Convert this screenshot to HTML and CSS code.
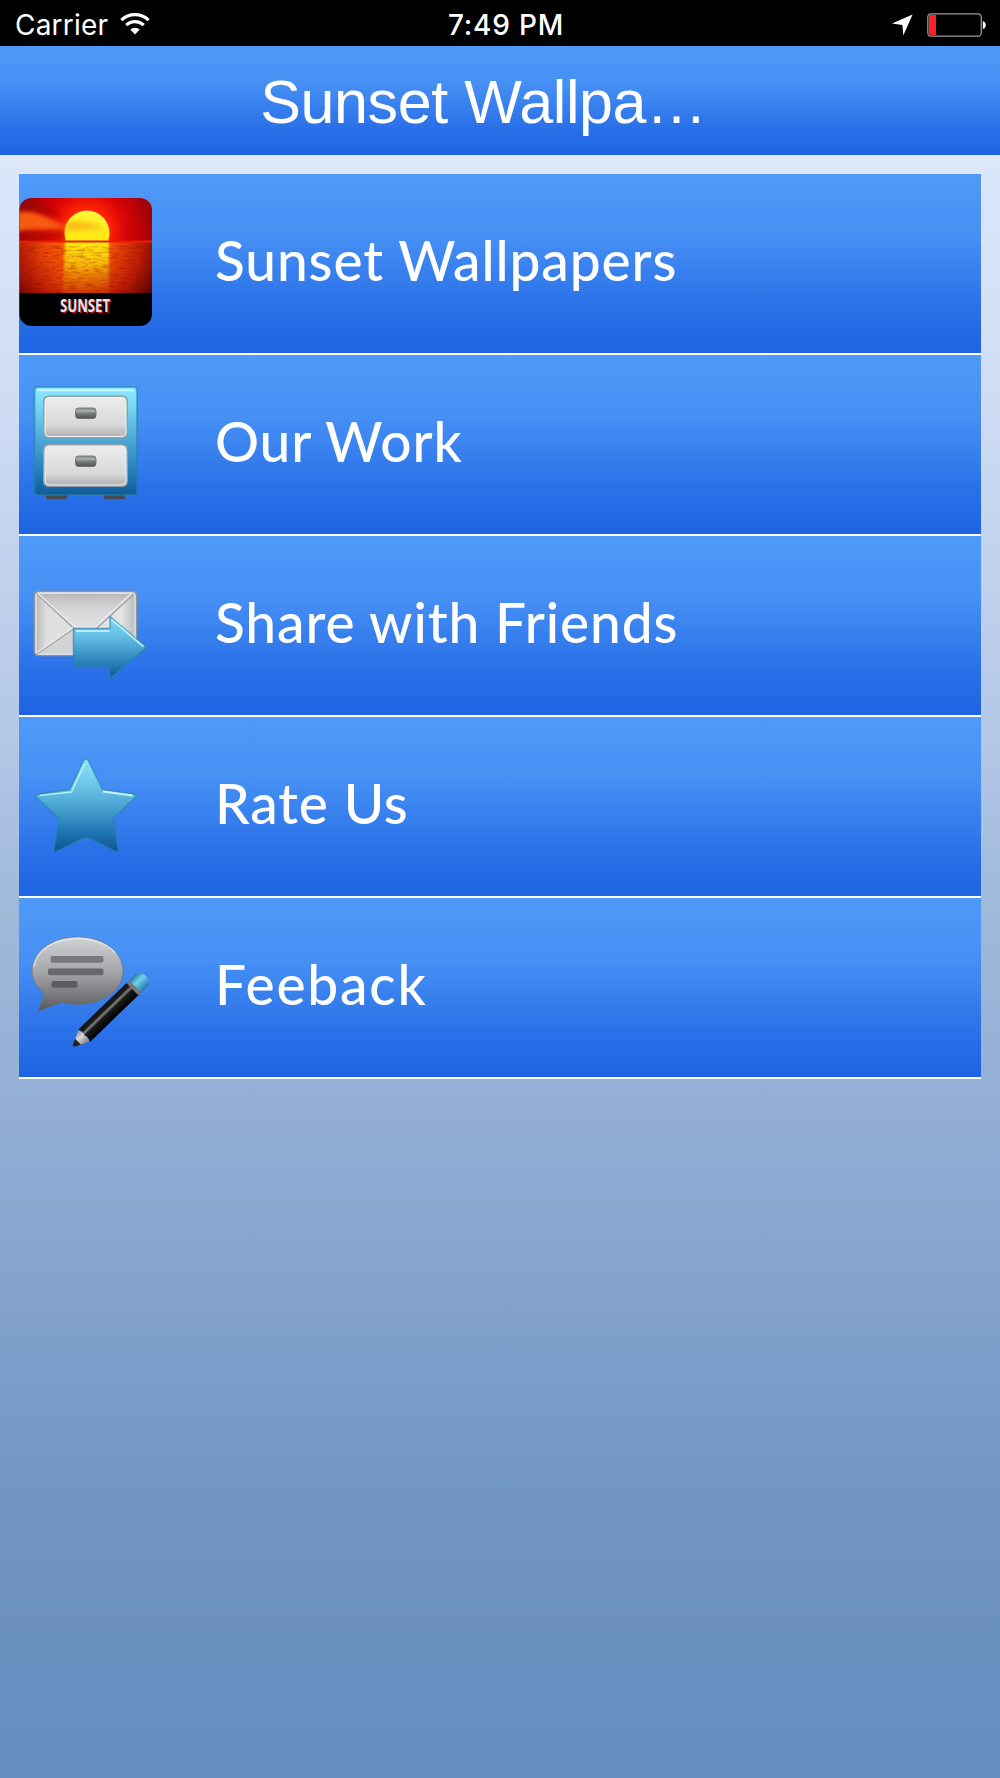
FILE: index.html
```html
<!DOCTYPE html>
<html lang="en">
<head>
    <meta charset="UTF-8"/>
    <meta name="viewport" content="width=device-width, initial-scale=1.0"/>
    <title>Sunset Wallpapers</title>
    <link rel="stylesheet" href="styles.css">
</head>
<body>
    <div class="status-bar">
        <div class="carrier">
            <span>Carrier</span>
            <svg class="wifi" viewBox="0 0 30 22" width="30" height="22">
                <path d="M1.4 7.2 A19.5 19.5 0 0 1 28.6 7.2" fill="none" stroke="#fff" stroke-width="3.2"/>
                <path d="M6.3 12.2 A12.4 12.4 0 0 1 23.7 12.2" fill="none" stroke="#fff" stroke-width="3.2"/>
                <path d="M10.3 16.6 A6.8 6.8 0 0 1 19.7 16.6 L15 21.5 Z" fill="#fff"/>
            </svg>
        </div>
        <span class="time">7:49 PM</span>
        <div class="status-right">
            <svg viewBox="0 0 21 22" width="21" height="22">
                <path d="M20.600 0.5 L0 9.6 L10.400 11 L11.300 21.5 Z" fill="#fff"/>
            </svg>
            <svg viewBox="0 0 59 24" width="59" height="24">
                <rect x="0.8" y="0.8" width="53.5" height="22.4" rx="3.5" fill="none" stroke="#999" stroke-width="1.3"/>
                <path d="M3.5 2 H9 V22 H3.5 Q2 22 2 20 V4 Q2 2 3.5 2 Z" fill="#ff1f24"/>
                <path d="M55.800 8 Q58.800 9 58.800 12 Q58.800 15 55.800 16 Z" fill="#fff"/>
            </svg>
        </div>
    </div>

    <div class="header">
        <h1>Sunset Wallpa…</h1>
    </div>

    <ul class="menu">
        <li class="row">
            <svg class="icon" viewBox="0 0 140 140">
                <defs>
                    <clipPath id="appClip"><rect x="0.5" y="6" width="132.5" height="128" rx="12"/></clipPath>
                    <clipPath id="skyClip"><rect x="0" y="6" width="133" height="43"/></clipPath>
                    <radialGradient id="sky" gradientUnits="userSpaceOnUse" cx="68" cy="38" r="76">
                        <stop offset="0.28" stop-color="#ff2406"/>
                        <stop offset="0.5" stop-color="#dc0508"/>
                        <stop offset="1" stop-color="#870006"/>
                    </radialGradient>
                    <radialGradient id="sea" gradientUnits="userSpaceOnUse" cx="62" cy="50" r="88">
                        <stop offset="0" stop-color="#ff6a08"/>
                        <stop offset="0.4" stop-color="#ee4a08"/>
                        <stop offset="0.7" stop-color="#b81c04"/>
                        <stop offset="1" stop-color="#4c0202"/>
                    </radialGradient>
                    <linearGradient id="glow" x1="0" y1="0" x2="0" y2="1">
                        <stop offset="0" stop-color="#ffef10"/>
                        <stop offset="0.4" stop-color="#fac808"/>
                        <stop offset="1" stop-color="#d87508" stop-opacity="0.2"/>
                    </linearGradient>
                    <linearGradient id="sun" x1="0" y1="0" x2="0" y2="1">
                        <stop offset="0" stop-color="#fff83a"/>
                        <stop offset="0.5" stop-color="#ffe81a"/>
                        <stop offset="0.8" stop-color="#fff200"/>
                        <stop offset="1" stop-color="#ff8a00"/>
                    </linearGradient>
                    <filter id="soft" x="-20%" y="-50%" width="140%" height="200%"><feGaussianBlur stdDeviation="2"/></filter>
                    <filter id="softer" x="-20%" y="-20%" width="140%" height="140%"><feGaussianBlur stdDeviation="1.3"/></filter>
                    <filter id="ripple" x="0" y="0" width="100%" height="100%">
                        <feTurbulence type="fractalNoise" baseFrequency="0.12 0.5" numOctaves="3" seed="4"/>
                        <feColorMatrix values="0 0 0 0 0.3  0 0 0 0 0  0 0 0 0 0  1.8 0 0 0 -0.75"/>
                    </filter>
                </defs>
                <g clip-path="url(#appClip)">
                    <rect x="0" y="6" width="133" height="44" fill="url(#sky)"/>
                    <g clip-path="url(#skyClip)">
                        <path d="M-4 21 C14 16 28 25 48 36 C30 40 14 36 -4 40 Z" fill="#f75a10" filter="url(#soft)"/>
                        <path d="M-4 9 L28 14 L44 26 L14 18 Z" fill="#8e0a04" opacity="0.45" filter="url(#soft)"/>
                        <path d="M-4 43 L44 39 L44 46 L-4 49 Z" fill="#a80a04" opacity="0.6" filter="url(#soft)"/>
                        <circle cx="68" cy="41" r="22.5" fill="url(#sun)"/>
                        <path d="M46 32 C56 27 68 30 84 35 C72 39 60 37 46 38 Z" fill="#f9a70c" opacity="0.7" filter="url(#soft)"/>
                    </g>
                    <rect x="0" y="50" width="133" height="52" fill="url(#sea)"/>
                    <path d="M46 48 H90 V101 H44 Z" fill="url(#glow)" filter="url(#softer)"/>
                    <rect x="0" y="54" width="133" height="48" filter="url(#ripple)" opacity="0.5"/>
                    <rect x="0" y="48.500" width="133" height="2" fill="#e81c04"/>
                    <rect x="0" y="101" width="133" height="34" fill="#000"/>
                </g>
                <text class="app-text shade" x="67" y="120.500" textLength="50" lengthAdjust="spacingAndGlyphs">SUNSET</text>
                <text class="app-text" x="66" y="120" textLength="50" lengthAdjust="spacingAndGlyphs">SUNSET</text>
            </svg>
            <span class="label">Sunset Wallpapers</span>
        </li>
        <li class="row">
            <svg class="icon" viewBox="0 0 140 140">
                <defs>
                    <linearGradient id="cab" x1="0" y1="0" x2="0" y2="1">
                        <stop offset="0" stop-color="#8be6fa"/>
                        <stop offset="0.15" stop-color="#7cdcf5"/>
                        <stop offset="0.55" stop-color="#439fd0"/>
                        <stop offset="0.9" stop-color="#166cab"/>
                        <stop offset="1" stop-color="#125a94"/>
                    </linearGradient>
                    <linearGradient id="drawer" x1="0" y1="0" x2="0" y2="1">
                        <stop offset="0" stop-color="#ededee"/>
                        <stop offset="0.7" stop-color="#d8d8da"/>
                        <stop offset="1" stop-color="#aeaeb2"/>
                    </linearGradient>
                    <linearGradient id="knob" x1="0" y1="0" x2="0" y2="1">
                        <stop offset="0" stop-color="#8f9292"/>
                        <stop offset="0.35" stop-color="#a9abab"/>
                        <stop offset="0.45" stop-color="#828484"/>
                        <stop offset="1" stop-color="#4c4e50"/>
                    </linearGradient>
                </defs>
                <rect x="27" y="119" width="21" height="7" rx="1.5" fill="#444a50"/>
                <rect x="85" y="119" width="21" height="7" rx="1.5" fill="#444a50"/>
                <rect x="15.500" y="14" width="102.500" height="108" rx="3" fill="url(#cab)" stroke="#2583a8" stroke-opacity="0.55" stroke-width="2"/>
                <path d="M18 17.2 H115" stroke="#c9f7ff" stroke-width="2"/>
                <rect x="25" y="23.5" width="83" height="41" rx="4.5" fill="url(#drawer)" stroke="#8fa0a8" stroke-width="2"/>
                <rect x="26" y="24.5" width="81" height="39" rx="4" fill="none" stroke="#f4f4f4" stroke-width="1"/>
                <rect x="25" y="72" width="83" height="41" rx="4.5" fill="url(#drawer)" stroke="#8fa0a8" stroke-width="2"/>
                <rect x="26" y="73" width="81" height="39" rx="4" fill="none" stroke="#f4f4f4" stroke-width="1"/>
                <rect x="56.500" y="35" width="20.500" height="10.5" rx="3" fill="url(#knob)" stroke="#66686a" stroke-width="0.8"/>
                <rect x="56.500" y="83" width="20.500" height="10.5" rx="3" fill="url(#knob)" stroke="#66686a" stroke-width="0.8"/>
            </svg>
            <span class="label">Our Work</span>
        </li>
        <li class="row">
            <svg class="icon" viewBox="0 0 140 140">
                <defs>
                    <linearGradient id="env" x1="0" y1="0" x2="1" y2="0">
                        <stop offset="0" stop-color="#b4b5b7"/>
                        <stop offset="0.12" stop-color="#dddee0"/>
                        <stop offset="0.85" stop-color="#e4e5e7"/>
                        <stop offset="1" stop-color="#b4b5b7"/>
                    </linearGradient>
                    <linearGradient id="flap" x1="0" y1="0" x2="0" y2="1">
                        <stop offset="0" stop-color="#bbbbbd"/>
                        <stop offset="0.5" stop-color="#d8d8da"/>
                        <stop offset="1" stop-color="#e2e2e4"/>
                    </linearGradient>
                    <linearGradient id="arrow" x1="0" y1="0" x2="0" y2="1">
                        <stop offset="0" stop-color="#80dcf6"/>
                        <stop offset="0.3" stop-color="#66c1e6"/>
                        <stop offset="0.8" stop-color="#2379b4"/>
                        <stop offset="1" stop-color="#0f538c"/>
                    </linearGradient>
                </defs>
                <rect x="15.5" y="37.5" width="102" height="64" rx="4" fill="url(#env)" stroke="#909296" stroke-width="1.6"/>
                <path d="M19 40 L55 74 H78 L114 40 Z" fill="url(#flap)"/>
                <path d="M19 99 L54 75 H79 L114 99 Z" fill="#d2d3d5"/>
                <rect x="17" y="39" width="99" height="61" rx="3" fill="none" stroke="#dfdfe0" stroke-width="1.6"/>
                <path d="M18 40 L55 74.5 L18 100 M115 40 L78 74" fill="none" stroke="#a2a3a5" stroke-width="1.5"/>
                <path d="M19 39.5 L56 73 M19 98 L54 73.5 M113 39 L76 73" fill="none" stroke="#eee" stroke-width="1.2"/>
                <path d="M54.5 74.5 H91 V62.5 L127.5 93.5 L91 124.5 V112.5 H54.5 Z" fill="url(#arrow)" stroke="#2b7fae" stroke-opacity="0.7" stroke-width="1.4" stroke-linejoin="round"/>
                <path d="M57 77 H90.5 M92.5 65.5 L124.5 92.5" fill="none" stroke="#b5effc" stroke-width="1.8"/>
            </svg>
            <span class="label">Share with Friends</span>
        </li>
        <li class="row">
            <svg class="icon" viewBox="0 0 140 140">
                <defs>
                    <linearGradient id="star" x1="0" y1="0" x2="0" y2="1">
                        <stop offset="0" stop-color="#8ce6fa"/>
                        <stop offset="0.35" stop-color="#62bde2"/>
                        <stop offset="0.8" stop-color="#1e74b2"/>
                        <stop offset="1" stop-color="#105390"/>
                    </linearGradient>
                </defs>
                <path d="M67 24 Q68.500 24 69.500 26 L83.500 54.5 L116.500 59.500 Q118 60.500 116.500 62 L94.500 83 L99 115 Q99 117.500 96.500 116.500 L70.500 103.500 Q67 102 63.500 103.500 L37.500 116.500 Q35 117.500 35 115 L40 83 L17 62 Q15.500 60.500 18 59.500 L50.500 54.5 L64.500 26 Q65.500 24 67 24 Z" fill="url(#star)" stroke="#2783ac" stroke-opacity="0.6" stroke-width="1.6"/>
                <path d="M20.500 60.500 L52.500 57 L65.500 29" fill="none" stroke="#c5f3fc" stroke-width="1.6" stroke-opacity="0.85"/>
                <path d="M84 56.500 L113.500 60.500" stroke="#c5f3fc" stroke-width="1.8"/>
            </svg>
            <span class="label">Rate Us</span>
        </li>
        <li class="row">
            <svg class="icon feedback" viewBox="0 0 140 140">
                <defs>
                    <linearGradient id="bubble" x1="0" y1="0" x2="0" y2="1">
                        <stop offset="0" stop-color="#d2d3d5"/>
                        <stop offset="0.5" stop-color="#a2a3a6"/>
                        <stop offset="0.9" stop-color="#68696c"/>
                        <stop offset="1" stop-color="#4c4e54"/>
                    </linearGradient>
                    <linearGradient id="barrel" x1="0" y1="0" x2="0" y2="1">
                        <stop offset="0" stop-color="#111"/>
                        <stop offset="0.25" stop-color="#1c1c1c"/>
                        <stop offset="0.38" stop-color="#858585"/>
                        <stop offset="0.52" stop-color="#1a1a1a"/>
                        <stop offset="1" stop-color="#000"/>
                    </linearGradient>
                    <linearGradient id="eraser" x1="0" y1="0" x2="0" y2="1">
                        <stop offset="0" stop-color="#237da6"/>
                        <stop offset="0.4" stop-color="#74d2ef"/>
                        <stop offset="1" stop-color="#1f79ac"/>
                    </linearGradient>
                    <linearGradient id="wood" x1="0" y1="0" x2="0" y2="1">
                        <stop offset="0" stop-color="#8c8c8c"/>
                        <stop offset="0.4" stop-color="#d8d8d8"/>
                        <stop offset="1" stop-color="#77787a"/>
                    </linearGradient>
                </defs>
                <path d="M58.500 24 C84.500 24 104 39 104 58 C104 77 84.500 91.500 58.500 91.500 Q49.500 91.500 42.500 89.500 L19.500 98 L25 80.500 C17.500 74 13 66 13 58 C13 39 32.500 24 58.500 24 Z" fill="url(#bubble)" stroke="#6f7073" stroke-opacity="0.6" stroke-width="1"/>
                <path d="M15 54 C17.500 37 34.500 26 58.500 25.500 C74.500 25.500 88.500 31 96.500 40" fill="none" stroke="#ededee" stroke-width="1.3" stroke-opacity="0.75"/>
                <rect x="31.500" y="43" width="53" height="6.800" rx="2" fill="#78797b"/>
                <rect x="29" y="55.500" width="55.500" height="6.800" rx="2" fill="#68696b"/>
                <rect x="32.500" y="68" width="26" height="6.800" rx="2" fill="#5c5d60"/>
                <g transform="translate(55 132.500) rotate(-44)">
                    <path d="M0 -1.500 L14 -8 L16 0 L14 8 L0 1.500 Z" fill="url(#wood)"/>
                    <path d="M-1 0 Q-1 -2 5.500 -4 V4 Q-1 2 -1 0 Z" fill="#222"/>
                    <path d="M14 -8.500 H83 V8.500 H14 Q17 4 14.500 0 Q17 -4 14 -8.500 Z" fill="url(#barrel)"/>
                    <rect x="81" y="-8.500" width="4" height="17" fill="#777"/>
                    <path d="M85 -8.500 H94 Q100 -7 100 0 Q100 7 94 8.500 H85 Z" fill="url(#eraser)"/>
                </g>
            </svg>
            <span class="label wide">Feeback</span>
        </li>
    </ul>
</body>
</html>
```

FILE: styles.css
```css
* {
    box-sizing: border-box;
}
body {
    margin: 0;
    min-height: 1778px;
    background: linear-gradient(#dce8fa 150px, #d0def5 380px, #b4c7e7 740px, #a0bada 900px, #93afd5 1100px, #7195c4 1500px, #658dbe 1778px);
    color: #fff;
}
.status-bar {
    display: grid;
    grid-template-columns: 1fr auto 1fr;
    align-items: center;
    height: 46px;
    padding: 4px 14px 0 15px;
    background: #000;
    font-family: Inter, sans-serif;
    font-size: 28px;
}
.carrier {
    display: flex;
    align-items: center;
    gap: 12px;
    letter-spacing: 0.2px;
}
.wifi {
    margin-bottom: 3px;
}
.time {
    padding-left: 11px;
    font-weight: 500;
    letter-spacing: 0.8px;
}
.status-right {
    display: flex;
    justify-content: flex-end;
    align-items: center;
    gap: 14px;
}
.header {
    height: 109px;
    padding-right: 33px;
    display: flex;
    align-items: center;
    justify-content: center;
    background: linear-gradient(#4f9af9, #468ff4 35%, #2a70e8 75%, #1e64e2);
}
h1 {
    margin: 0;
    padding-top: 2px;
    font-family: "Liberation Sans", Arial, sans-serif;
    font-weight: 400;
    font-size: 61px;
    letter-spacing: -0.4px;
    white-space: nowrap;
}
.menu {
    list-style: none;
    margin: 19px 19.5px 0 19px;
    padding: 0;
}
.row {
    display: flex;
    align-items: center;
    height: 181px;
    border-bottom: 2px solid #fff;
    background: linear-gradient(#4f9af9, #468ff4 35%, #2a70e8 75%, #1e64e2) padding-box;
}
.icon {
    width: 140px;
    height: 140px;
    margin-bottom: 3px;
    flex: none;
}
.feedback {
    margin-bottom: 10px;
}
.label {
    padding: 0 0 7px 56px;
    font-family: Lato, sans-serif;
    font-weight: 500;
    font-size: 55px;
    white-space: nowrap;
    letter-spacing: 0.9px;
}
.wide {
    letter-spacing: 1.8px;
}
.app-text {
    font-family: "Open Sans", sans-serif;
    font-weight: 700;
    font-size: 17px;
    fill: #e8e4e4;
    text-anchor: middle;
}
.shade {
    fill: #d01020;
}
```
